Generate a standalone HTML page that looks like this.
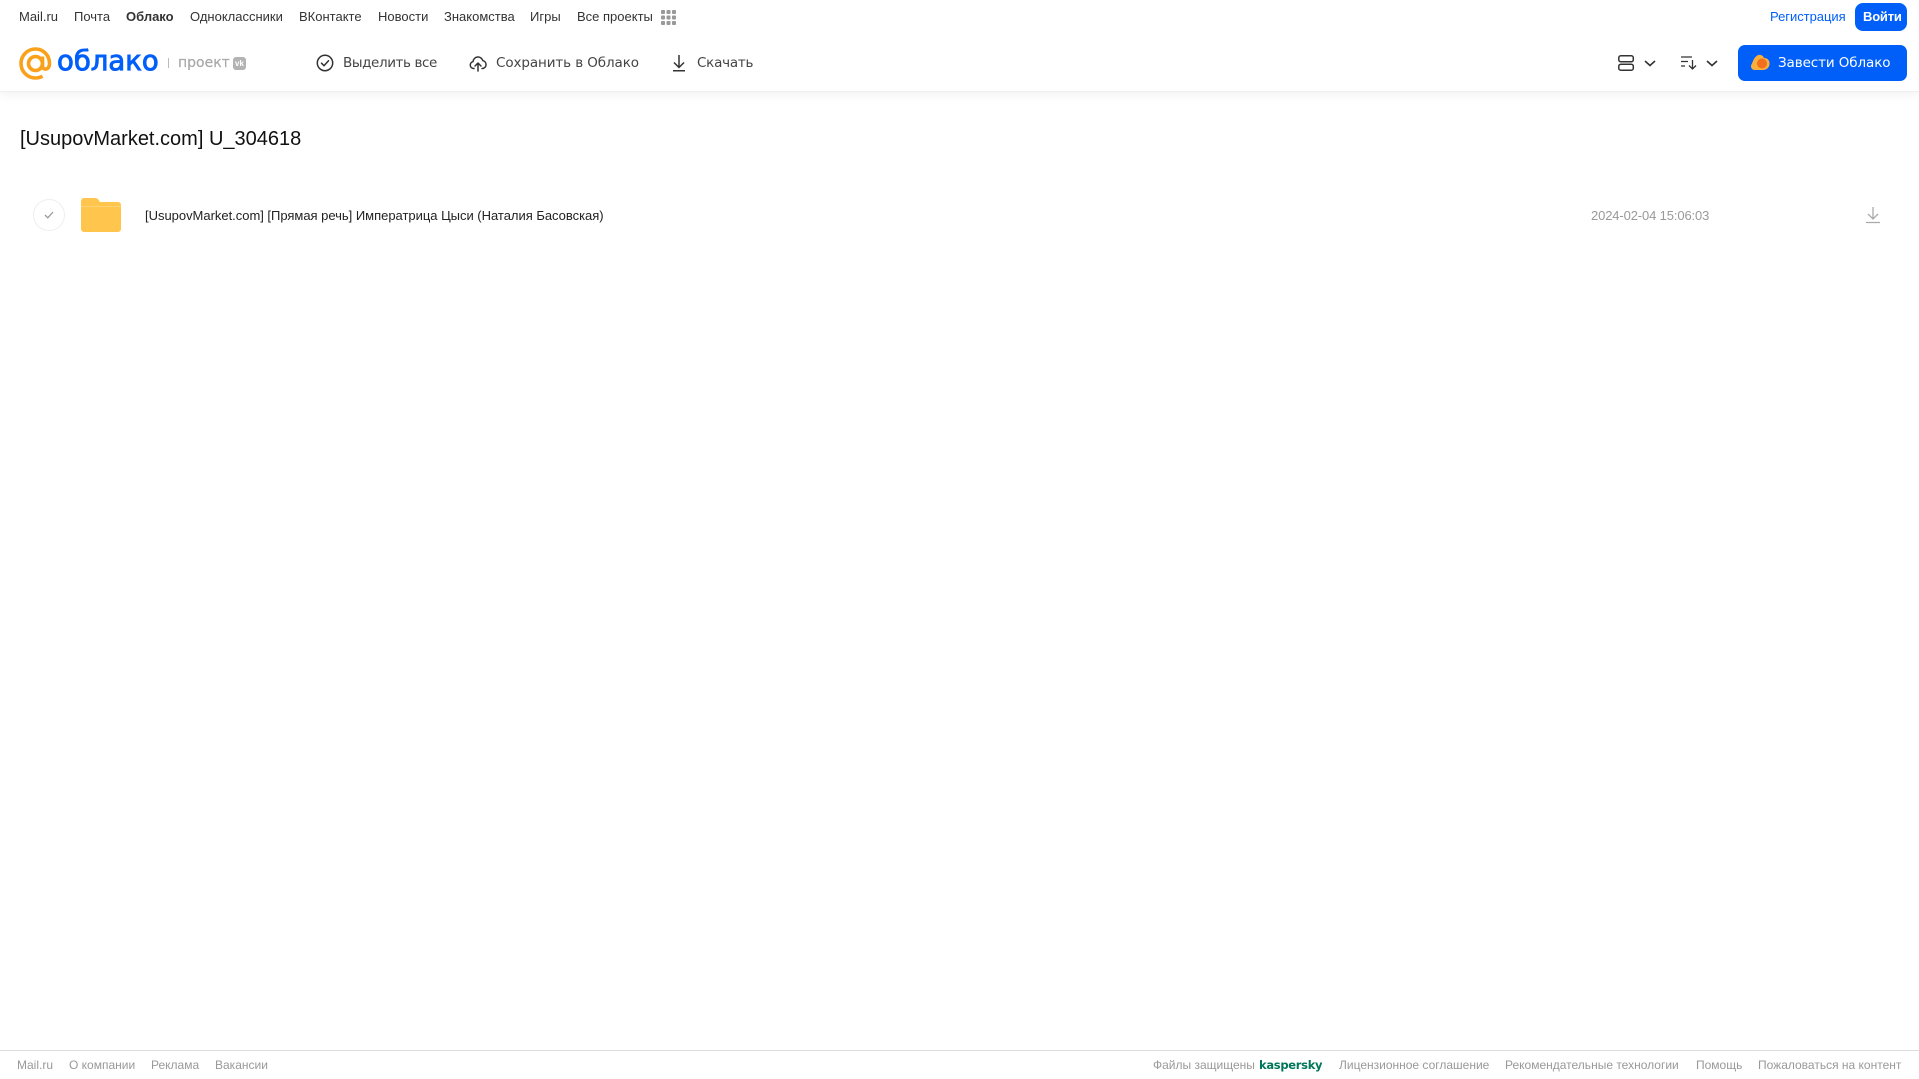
<!DOCTYPE html>
<html lang="ru"><head><meta charset="utf-8"><title>Облако</title>
<style>
html,body{margin:0;padding:0;background:#fff;width:1919px;height:1079px;overflow:hidden}
body{position:relative;font-family:"Liberation Sans",sans-serif;color:#333}
.t{position:absolute;white-space:nowrap;line-height:20px}
.n{font-size:13px;top:7px;color:#333}
.h{font-family:"DejaVu Sans",sans-serif;font-size:13.5px;top:53px;color:#444;letter-spacing:-.1px}
.f{font-size:12px;top:1055px;color:#999}
svg{position:absolute;overflow:visible}
#hdr{position:absolute;left:0;top:0;width:1919px;height:91px;background:#fff;box-shadow:0 1px 1px #eee,0 4px 10px rgba(0,0,0,.05)}
</style></head><body>
<div id="hdr"></div>
<a class="t n" style="left:19px">Mail.ru</a>
<a class="t n" style="left:74px">Почта</a>
<a class="t n" style="left:126px;font-weight:bold">Облако</a>
<a class="t n" style="left:190px">Одноклассники</a>
<a class="t n" style="left:299px">ВКонтакте</a>
<a class="t n" style="left:378px">Новости</a>
<a class="t n" style="left:444px">Знакомства</a>
<a class="t n" style="left:530px">Игры</a>
<a class="t n" style="left:577px">Все проекты</a>
<svg style="left:661px;top:10px" width="15" height="15" fill="#999"><rect x="0" y="0" width="4" height="4" rx="1"/><rect x="5.500" y="0" width="4" height="4" rx="1"/><rect x="11" y="0" width="4" height="4" rx="1"/><rect x="0" y="5.500" width="4" height="4" rx="1"/><rect x="5.500" y="5.500" width="4" height="4" rx="1"/><rect x="11" y="5.500" width="4" height="4" rx="1"/><rect x="0" y="11" width="4" height="4" rx="1"/><rect x="5.500" y="11" width="4" height="4" rx="1"/><rect x="11" y="11" width="4" height="4" rx="1"/></svg>
<a class="t n" style="left:1770px;color:#005ff9;letter-spacing:-.03px">Регистрация</a>
<div style="position:absolute;left:1855px;top:3px;width:52px;height:28px;border-radius:8px;background:#005ff9"></div>
<a class="t n" style="left:1863px;color:#fff;font-weight:bold;letter-spacing:-.2px">Войти</a>

<svg style="left:19px;top:47px" width="33" height="33" viewBox="0 0 33 33" fill="none" stroke="#f9a11b" stroke-width="3.600"><circle cx="16.500" cy="16.500" r="7"/><path d="M23.500 9.500v9.500c0 4.500 7 4.500 7-2.500C30.500 8 24 2 16.500 2 8.500 2 2 8.500 2 16.500S8.500 31 16.500 31c3 0 5-.6 7-1.800"/></svg>
<div class="t" style="left:57px;top:45px;line-height:32px;font-family:'DejaVu Sans',sans-serif;font-size:27.500px;color:#005ff9;-webkit-text-stroke:.9px #005ff9">облако</div>
<div style="position:absolute;left:168px;top:58px;width:1px;height:10px;background:#bbb"></div>
<div class="t" style="left:178px;top:53px;font-family:'DejaVu Sans',sans-serif;font-size:14px;color:#a8a8a8;-webkit-text-stroke:.2px #a8a8a8">проект</div>
<div style="position:absolute;left:233px;top:57px;width:13px;height:13px;border-radius:3px;background:#b3b3b3"></div>
<div class="t" style="left:235px;top:58px;font-size:8px;line-height:11px;font-weight:bold;color:#fff">vk</div>

<svg style="left:316px;top:54px" width="18" height="18" viewBox="0 0 18 18" fill="none" stroke="#333" stroke-width="1.500"><circle cx="9" cy="9" r="7.700"/><path d="M5.500 9.200l2.500 2.500 4.500-5" stroke-linecap="round" stroke-linejoin="round"/></svg>
<div class="t h" style="left:343px;letter-spacing:-.4px">Выделить все</div>
<svg style="left:469px;top:54px" width="18" height="18" viewBox="0 0 18 18" fill="none" stroke="#333" stroke-width="1.500" stroke-linecap="round" stroke-linejoin="round"><path d="M5 14.500H4.500a3.500 3.500 0 0 1-.5-6.900 5 5 0 0 1 9.800-1 4 4 0 0 1-.3 7.900H13"/><path d="M9 17V9.500M6 12l3-3 3 3"/></svg>
<div class="t h" style="left:496px">Сохранить в Облако</div>
<svg style="left:671px;top:54px" width="16" height="18" viewBox="0 0 16 18" fill="none" stroke="#333" stroke-width="1.500"><path d="M8 1v12M3 8.500L8 13.500l5-5M2 16.800h12"/></svg>
<div class="t h" style="left:697px;letter-spacing:-.25px">Скачать</div>

<svg style="left:1618px;top:55px" width="16" height="16" viewBox="0 0 16 16" fill="none" stroke="#333" stroke-width="1.500"><rect x=".8" y=".8" width="14.500" height="6" rx="2"/><rect x=".8" y="9.200" width="14.500" height="6" rx="2"/></svg>
<svg style="left:1644px;top:60px" width="12" height="7" fill="none" stroke="#333" stroke-width="1.600"><path d="M1 1l5 4.500L11 1"/></svg>
<svg style="left:1681px;top:56px" width="16" height="14" fill="none" stroke="#333" stroke-width="1.300"><path d="M0 1h11M0 5.500h7M0 10h4M11.500 4v8.500M8 9.500l3.500 3.500L15 9.500"/></svg>
<svg style="left:1706px;top:60px" width="12" height="7" fill="none" stroke="#333" stroke-width="1.600"><path d="M1 1l5 4.500L11 1"/></svg>
<div style="position:absolute;left:1738px;top:45px;width:169px;height:36px;border-radius:7px;background:#005ff9"></div>
<svg style="left:1750px;top:54px" width="20" height="18" viewBox="0 0 20 18"><path d="M5 16C1 16 0 12 2 9.500 3 7 4 4 6 2.500 9-.5 13 1 14 4c4 0 6 3 5.500 6.500C19 14 16 16 13 16z" fill="#fbb03b"/><circle cx="12" cy="9.500" r="5" fill="#f2701d"/></svg>
<div class="t h" style="left:1778px;color:#fff">Завести Облако</div>

<div class="t" style="left:20px;top:127px;font-size:20px;line-height:24px;color:#111">[UsupovMarket.com] U_304618</div>

<div style="position:absolute;left:33px;top:199px;width:30px;height:30px;border:1px solid #eee;border-radius:50%"></div>
<svg style="left:44px;top:211px" width="10" height="8" fill="none" stroke="#999" stroke-width="1.300"><path d="M1 4l2.800 2.800L9 1"/></svg>
<svg style="left:81px;top:198px" width="40" height="34" viewBox="0 0 40 34"><path d="M3 0h10c3 0 4 1 5 2.500L19 4h18a3 3 0 0 1 3 3v24a3 3 0 0 1-3 3H3a3 3 0 0 1-3-3V3a3 3 0 0 1 3-3z" fill="#ffc54d"/><rect y="8" width="40" height="1" fill="#ffd273"/></svg>
<div class="t" style="left:145px;top:206px;font-size:13px;color:#222;letter-spacing:-.02px">[UsupovMarket.com] [Прямая речь] Императрица Цыси (Наталия Басовская)</div>
<div class="t" style="left:1591px;top:206px;font-size:13px;color:#999;letter-spacing:-.13px">2024-02-04 15:06:03</div>
<svg style="left:1866px;top:207px" width="14" height="17" fill="none" stroke="#aaa" stroke-width="1.300"><path d="M7 0v12M2 7l5 5 5-5M0 15.500h14"/></svg>

<div style="position:absolute;left:0;top:1050px;width:1919px;height:1px;background:#ddd"></div>
<a class="t f" style="left:17px">Mail.ru</a>
<a class="t f" style="left:69px">О компании</a>
<a class="t f" style="left:151px">Реклама</a>
<a class="t f" style="left:215px">Вакансии</a>
<a class="t f" style="left:1153px">Файлы защищены</a>
<span class="t f" style="left:1259px;font-family:'DejaVu Sans',sans-serif;font-weight:bold;color:#00765a;font-size:11.500px;letter-spacing:-.3px">kaspersky</span>
<a class="t f" style="left:1339px">Лицензионное соглашение</a>
<a class="t f" style="left:1505px">Рекомендательные технологии</a>
<a class="t f" style="left:1696px">Помощь</a>
<a class="t f" style="left:1758px">Пожаловаться на контент</a>
</body></html>
